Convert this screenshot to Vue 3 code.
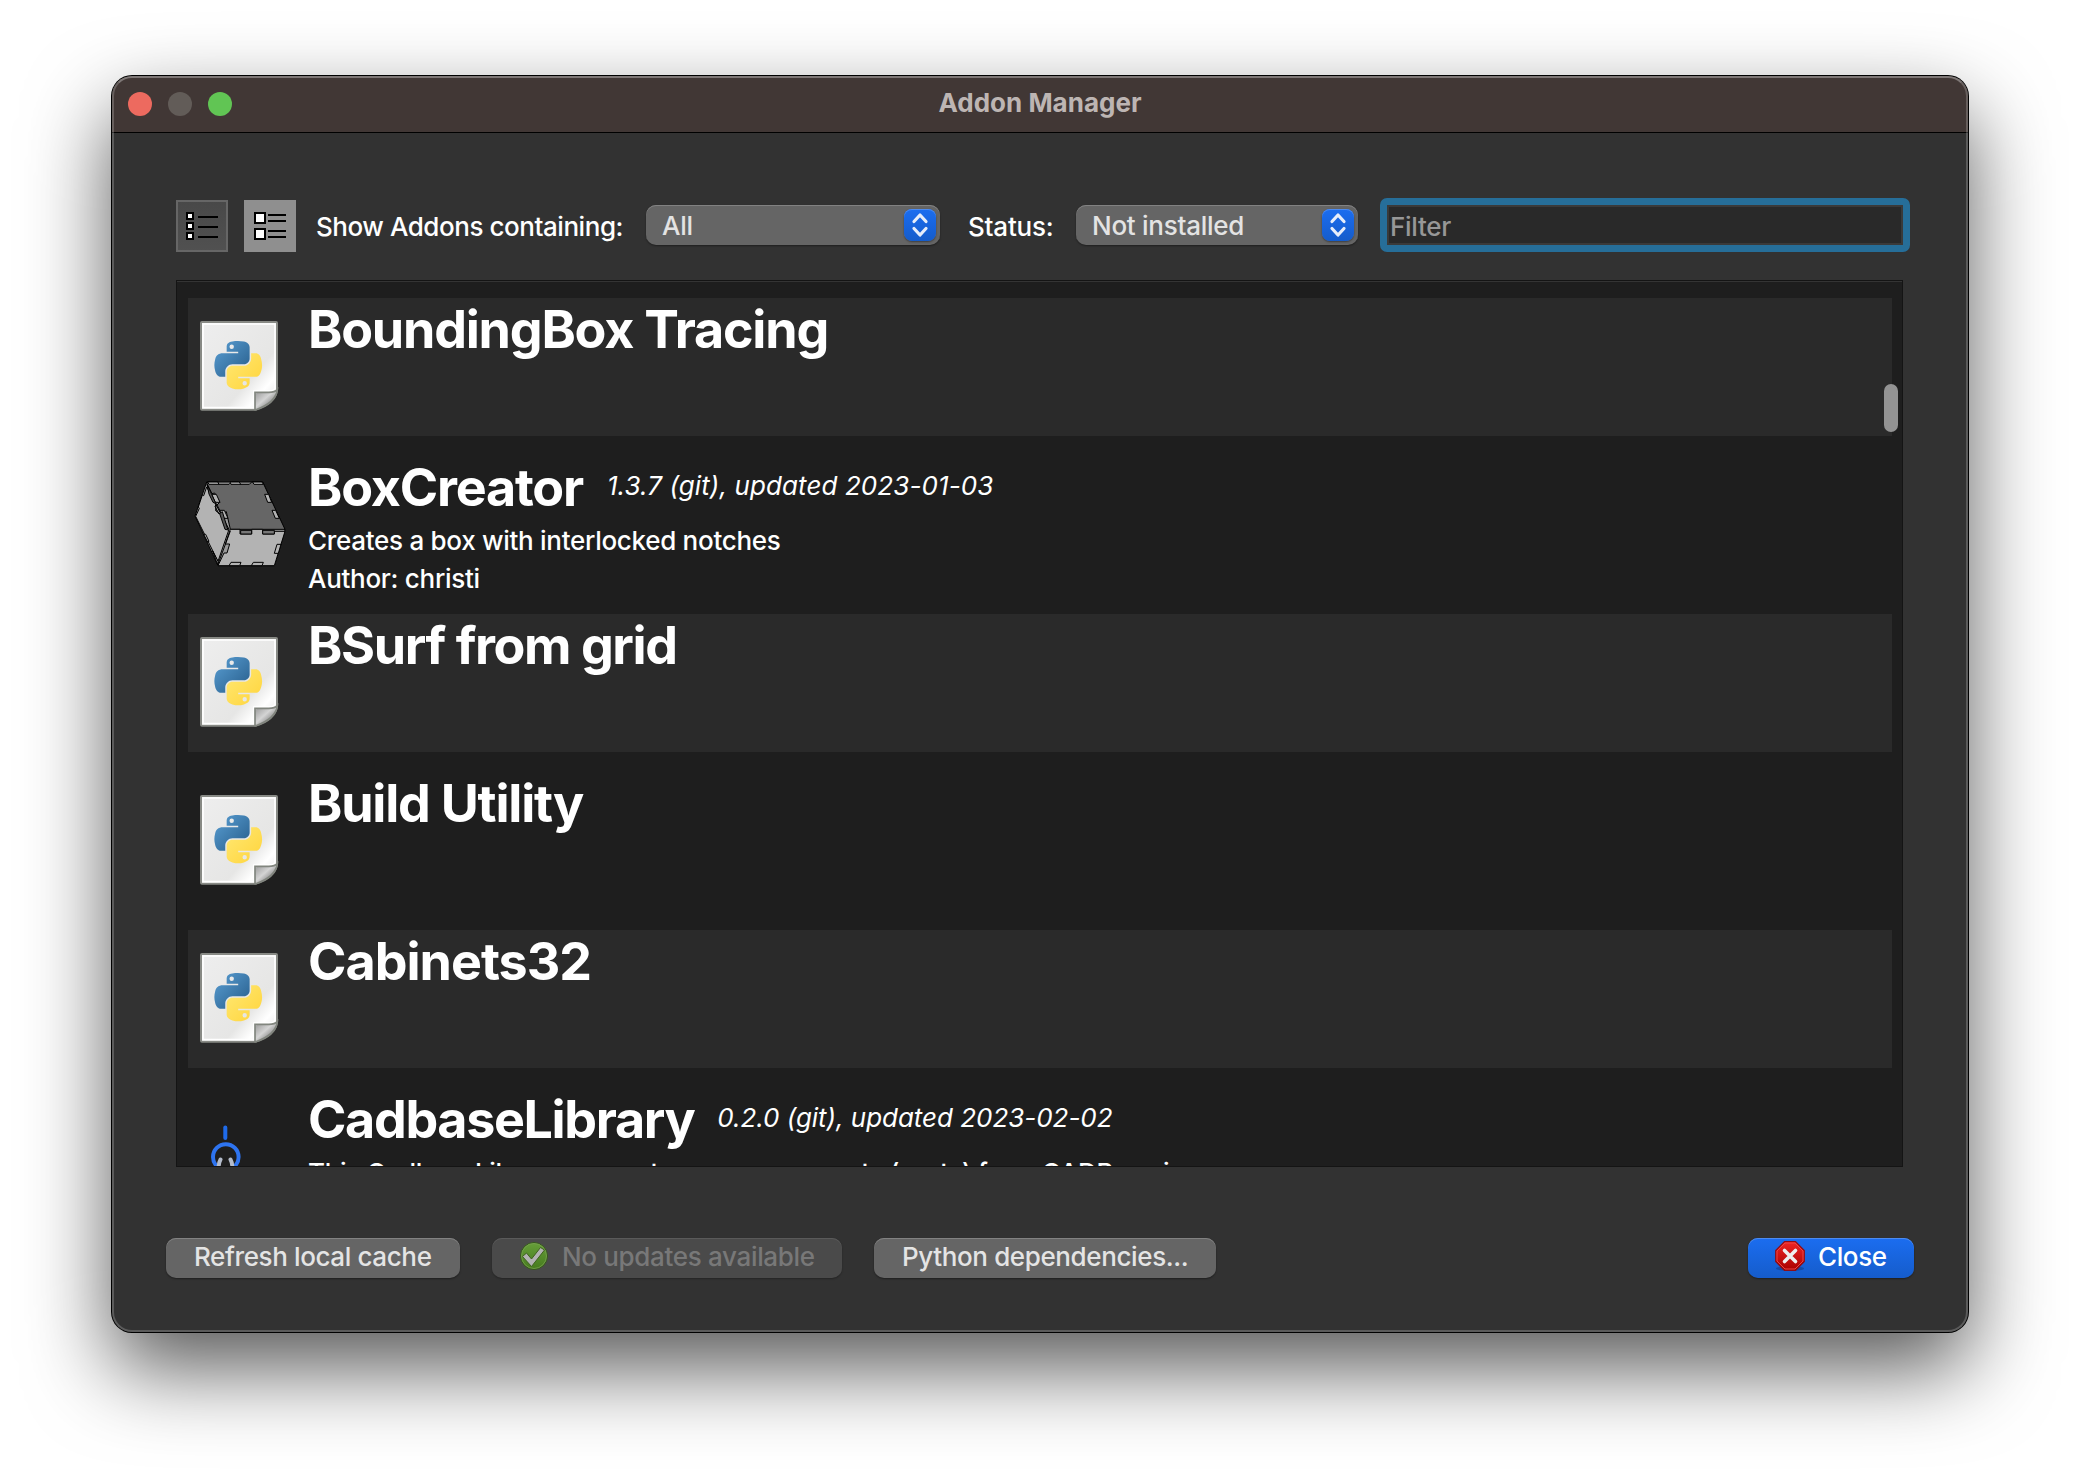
<script setup>
const addons = [
  { name: 'BoundingBox Tracing', icon: 'python' },
  { name: 'BoxCreator', icon: 'box', version: '1.3.7 (git), updated 2023-01-03', description: 'Creates a box with interlocked notches', author: 'Author: christi' },
  { name: 'BSurf from grid', icon: 'python' },
  { name: 'Build Utility', icon: 'python' },
  { name: 'Cabinets32', icon: 'python' },
  { name: 'CadbaseLibrary', icon: 'cadbase', version: '0.2.0 (git), updated 2023-02-02', description: 'This CadbaseLibrary macro to use components (parts) from CADBase in' },
]
</script>

<template>
  <div class="desktop">
    <section class="window">
      <header class="titlebar">
        <div class="lights"><i class="red"></i><i class="gray"></i><i class="green"></i></div>
        <h1>Addon Manager</h1>
      </header>
      <div class="toolbar">
        <button class="view">
          <svg width="52" height="52" viewBox="0 0 52 52">
            <g fill="#fff" stroke="#000" stroke-width="2"><path d="M11 13h6v6h-6zM11 23h6v6h-6zM11 33h6v6h-6z" /></g>
            <path d="M22 17h20M22 27h20M22 37h20" stroke="#000" stroke-width="2" />
          </svg>
        </button>
        <button class="view on">
          <svg width="52" height="52" viewBox="0 0 52 52">
            <path d="M11 13h10v10H11zM11 29h10v10H11z" fill="#fff" stroke="#000" stroke-width="2" />
            <path d="M24 15h18M24 21h18M24 31h18M24 37h18" stroke="#000" stroke-width="2" />
          </svg>
        </button>
        <span class="label show">Show Addons containing:</span>
        <div class="select all"><span>All</span>
          <b><svg width="32" height="32" viewBox="0 0 32 32"><path d="M10 12.500l6-6.500 6 6.500M10 19.500l6 6.500 6-6.500" /></svg></b>
        </div>
        <span class="label status">Status:</span>
        <div class="select state"><span>Not installed</span>
          <b><svg width="32" height="32" viewBox="0 0 32 32"><path d="M10 12.500l6-6.500 6 6.500M10 19.500l6 6.500 6-6.500" /></svg></b>
        </div>
        <div class="filter">Filter</div>
      </div>
      <main class="list">
        <article v-for="a in addons" :key="a.name" class="row" :class="a.icon">
          <div class="icon">
            <svg v-if="a.icon === 'python'" width="110" height="110" viewBox="0 0 330 330">
              <defs>
                <linearGradient id="paper" x1="0" y1="0" x2="1" y2="1"><stop offset="0" stop-color="#eee" /><stop offset=".65" stop-color="#e6e6e5" /><stop offset=".8" stop-color="#fff" /><stop offset="1" stop-color="#ddd" /></linearGradient>
                <linearGradient id="curl" x1="0" y1="0" x2="1" y2="1"><stop offset="0" stop-color="#eee" /><stop offset=".15" stop-color="#a8a8a8" /><stop offset=".45" stop-color="#d4d4d4" /><stop offset=".8" stop-color="#777" /></linearGradient>
                <linearGradient id="pyblue" x1="0" y1="0" x2="1" y2="1"><stop offset="0" stop-color="#5a9fd4" /><stop offset=".8" stop-color="#306998" /></linearGradient>
                <linearGradient id="pyyellow" x1="0" y1="0" x2="1" y2="1"><stop offset="0" stop-color="#ffe873" /><stop offset="1" stop-color="#ffd43b" /></linearGradient>
              </defs>
              <path d="M51 36H273Q276 36 276 39V243Q268 282 213 299H51Q48 299 48 296V39Q48 36 51 36Z" fill="url(#paper)" stroke="#888a85" stroke-width="6" />
              <path d="M54 42H270V236Q266 243 252 243H207V293H54Z" fill="none" stroke="#fff" stroke-width="5" />
              <path d="M210 299V247H252Q270 247 277 239Q272 278 213 299Z" fill="url(#curl)" stroke="#81857e" stroke-width="5" />
              <g transform="translate(88 93) scale(1.290)">
                <path fill="url(#pyblue)" d="M54.900 0C50.300 0 46 .4 42.100 1.100 30.800 3.100 28.700 7.300 28.700 15V25.200H55.500V28.600H18.700C10.900 28.600 4.100 33.300 2 42.200-.5 52.500-.6 58.900 2 69.500 3.900 77.400 8.400 83 16.200 83H25.400V70.800C25.400 61.900 33.100 54.100 42.100 54.100H68.800C76.200 54.100 82.100 48 82.100 40.600V15C82.100 7.800 76 2.400 68.800 1.200 64.200.4 59.500 0 54.900 0ZM40.400 8.200A5.100 5.100 0 1 1 40.400 18.500 5.100 5.100 0 0 1 40.400 8.200Z" />
                <path fill="url(#pyyellow)" d="M85.600 28.700V40.600C85.600 49.800 77.800 57.600 68.800 57.600H42.100C34.800 57.600 28.700 63.900 28.700 71.200V96.700C28.700 104 35 108.300 42.100 110.400 50.600 112.900 58.800 113.300 68.800 110.400 75.500 108.500 82.100 104.600 82.100 96.700V86.500H55.500V83.100H95.600C103.400 83.100 106.300 77.700 109 69.500 111.800 61.100 111.700 53 109 42.200 107.100 34.500 103.400 28.700 95.600 28.700ZM70.600 93.300A5.100 5.100 0 1 1 70.600 103.500 5.100 5.100 0 0 1 70.600 93.300Z" />
              </g>
            </svg>
            <svg v-else-if="a.icon === 'box'" width="110" height="110" viewBox="0 0 330 330" stroke="#000" stroke-width="3" stroke-linejoin="round">
              <path d="M65 51H233L300 195 268 302H99L30 153Z" fill="#999" />
              <path d="M65 66L56 92 52 90 40 126 43 130 32 154 99 289 132 193Z" fill="#b3b3b3" />
              <path d="M66 56L81 86 89 84 104 112 96 120 110 147 124 140 136 193H300L233 51H200L193 58H165L160 51H139L132 58H102L98 51H68Z" fill="#666" />
              <path d="M68 51H98L102 58H72ZM135 51H163L167 58H138ZM203 51H231L235 58H207ZM239 88H251L260 112H248ZM261 136H272L283 160H271ZM80 88H94L105 112H91ZM104 136H118L129 160H116Z" fill="#b3b3b3" />
              <path d="M66 58L80 88 91 112 94 118 90 124 102 147 112 140 128 192 130 195 120 193 104 146 92 137 93 116 84 112 72 87Z" fill="#555" />
              <path d="M136 193H165V207H200V193H233V207H268V199H300L268 302H99L117 264H126L134 237H121Z" fill="#b3b3b3" />
              <path d="M167 196H200V207H167ZM233 196H268V207H233Z" fill="#777" />
              <path d="M132 302L138 292H168L164 302ZM199 302L205 292H235L231 302ZM276 238H288L280 265H268ZM56 208H62L72 229 68 231ZM83 258L99 289 98 300Z" fill="#b3b3b3" />
              <path d="M136 198L98 300" fill="none" />
            </svg>
            <svg v-else width="110" height="110" viewBox="0 0 110 110" fill="none" stroke-linecap="round">
              <path d="M40.300 27.500V38" stroke="#1f6bea" stroke-width="4" />
              <circle cx="40.800" cy="57" r="12.800" stroke="#2e74f0" stroke-width="4" />
              <path d="M35.500 59.500Q33.500 63 33.500 70M45.500 59.500Q47.500 63 47.500 70" stroke="#b4bccb" stroke-width="4" />
            </svg>
          </div>
          <div class="info">
            <div class="head"><h2>{{ a.name }}</h2><em v-if="a.version">{{ a.version }}</em></div>
            <p v-if="a.description">{{ a.description }}</p>
            <p v-if="a.author">{{ a.author }}</p>
          </div>
        </article>
        <div class="thumb"></div>
      </main>
      <footer class="actions">
        <button class="btn refresh">Refresh local cache</button>
        <button class="btn updates">
          <svg width="30" height="30" viewBox="0 0 30 30"><defs><linearGradient id="ok" x1="0" y1="0" x2="0" y2="1"><stop offset="0" stop-color="#669f39" /><stop offset="1" stop-color="#467a1d" /></linearGradient></defs><circle cx="15" cy="15" r="13.500" fill="url(#ok)" stroke="#35551d" /><circle cx="15" cy="15" r="12.500" fill="none" stroke="#77a14f" stroke-width=".8" /><path d="M3.500 15.500L7.500 12 12.500 18 21.500 6.500 25.500 9 12.500 25.500Z" fill="#b3b3b3" stroke="#3f6120" stroke-width="1" /></svg>
          <span>No updates available</span>
        </button>
        <button class="btn deps">Python dependencies...</button>
        <button class="btn close">
          <svg width="30" height="30" viewBox="0 0 30 30"><defs><linearGradient id="stop" x1="0" y1="0" x2="0" y2="1"><stop offset="0" stop-color="#ee2525" /><stop offset="1" stop-color="#a90000" /></linearGradient></defs><ellipse cx="15" cy="27.500" rx="14" ry="2.500" fill="#123e8c" opacity=".6" /><path d="M9.500.7h11l8.800 8.800v11l-8.800 8.800h-11L.7 20.500v-11Z" fill="url(#stop)" stroke="#8c0d18" stroke-width="1.200" /><path d="M10 2h10l8 8v10l-8 8H10l-8-8V10Z" fill="none" stroke="#f04a4a" stroke-width=".9" /><path d="M9.500 9.500l11 11M20.500 9.500l-11 11" stroke="#eee" stroke-width="3.600" stroke-linecap="round" /></svg>
          <span>Close</span>
        </button>
      </footer>
    </section>
  </div>
</template>

<style>
body { background: #fff; }
</style>
<style scoped>
* { box-sizing: border-box; }
.desktop { width: 2080px; height: 1480px; padding: 76px 112px 148px; overflow: hidden; background: #fff; font-family: Inter, "Liberation Sans", sans-serif; font-size: 26px; font-weight: 450; color: #fff; }
.window { width: 1856px; height: 1256px; border-radius: 20px; background: #323232; box-shadow: 0 0 0 1px #000, 0 36px 84px rgba(0, 0, 0, .66); position: relative; display: flex; flex-direction: column; }
.window::after { content: ""; position: absolute; inset: 0; border: 2px solid rgba(255, 255, 255, .2); border-top-color: rgba(255, 255, 255, .32); border-radius: 20px; pointer-events: none; }
.titlebar { flex: none; height: 57px; display: grid; grid-template-columns: 200px 1fr 200px; background: #413735; border-bottom: 1px solid #000; border-radius: 20px 20px 0 0; }
.lights { display: flex; gap: 16px; padding: 16px; }
.lights i { width: 24px; height: 24px; border-radius: 50%; }
.red { background: #ed6a5f; }
.gray { background: #625c58; }
.green { background: #61c554; }
h1 { margin: 0; text-align: center; font-size: 26px; line-height: 54px; font-weight: 700; letter-spacing: 0; color: #bdb5b3; }
button { border: 0; padding: 0; margin: 0; font: inherit; color: inherit; display: flex; }
.toolbar { flex: none; display: flex; align-items: center; height: 54px; margin: 65px 58px 0 64px; white-space: nowrap; }
.view { width: 52px; height: 52px; background: linear-gradient(#484848, #515151); box-shadow: inset 0 0 0 2px #666; margin: 2px 16px 0 0; }
.view.on { background: #8f8f8f; box-shadow: none; margin-right: 20px; }
.label { line-height: 40px; padding-top: 3px; }
.show { width: 330px; letter-spacing: -.45px; }
.status { width: 108px; margin-left: 28px; letter-spacing: -.2px; }
.select { height: 40px; display: flex; justify-content: space-between; align-items: center; padding: 0 4px 0 16px; border-radius: 10px; background: #656565; box-shadow: inset 0 1px #828282, 0 1px 2px rgba(0, 0, 0, .4); color: #e3e3e3; line-height: 38px; letter-spacing: -.27px; }
.select span { padding-top: 2px; }
.all { width: 294px; }
.state { width: 282px; }
.select b { width: 32px; height: 32px; border-radius: 8px; background: linear-gradient(#1b6df0, #155ccb); box-shadow: inset 0 1px #4d8bf1, 0 1px 2px rgba(0, 0, 0, .4); }
.select svg { display: block; }
.select path { fill: none; stroke: #e6edfa; stroke-width: 3.200; stroke-linecap: round; stroke-linejoin: round; }
.filter { width: 530px; height: 54px; margin-left: 22px; border: 7px solid #266e99; border-radius: 7px; background: #292929; box-shadow: inset 0 0 0 2px #3a3a3a, inset 0 -2px #555; color: #979797; padding-left: 3px; line-height: 43px; letter-spacing: -.3px; }
.list { flex: none; position: relative; width: 1727px; height: 887px; margin: 28px 0 0 64px; padding: 17px 10px 0 11px; border: 1px solid #141414; background: #1e1e1e; box-shadow: inset 0 1px #343434; overflow: hidden; }
.row { height: 138px; margin-bottom: 20px; display: flex; }
.row:nth-child(odd) { background: #2a2a2a; }
.icon { width: 120px; height: 138px; padding: 12px 0 0; margin-left: -3px; flex: none; overflow: hidden; }
.box .icon { padding-top: 9px; }
.icon svg { display: block; }
.info { margin-left: 3px; white-space: nowrap; letter-spacing: -.29px; }
.head { display: flex; height: 66px; }
h2 { margin: 0; font-size: 52px; line-height: 63px; font-weight: 700; letter-spacing: -1.220px; }
.row:nth-child(3) h2 { letter-spacing: -1.400px; }
.row:nth-child(5) h2 { letter-spacing: -1px; }
.cadbase h2 { letter-spacing: -1.350px; }
em { margin-left: 24px; line-height: 60px; letter-spacing: .1px; }
.cadbase em { margin-left: 23px; letter-spacing: -.03px; }
p { margin: 0; line-height: 38px; }
.thumb { position: absolute; left: 1707px; top: 103px; width: 14px; height: 48px; border-radius: 7px; background: #939393; }
.actions { display: flex; margin: 71px 54px 0; white-space: nowrap; }
.btn { height: 40px; border-radius: 10px; background: #656565; box-shadow: inset 0 1px #828282, 0 1px 2px rgba(0, 0, 0, .4); color: #e4e4e4; line-height: 37px; padding-left: 28px; letter-spacing: -.38px; }
.refresh { width: 294px; margin-right: 32px; }
.updates { width: 350px; margin-right: 32px; background: #4a4a4a; box-shadow: inset 0 1px #5a5a5a, 0 1px 2px rgba(0, 0, 0, .3); color: #787878; padding-left: 27px; letter-spacing: -.33px; }
.updates svg, .close svg { margin: 3px 13px 0 0; }
.deps { width: 342px; }
.close { width: 166px; margin-left: auto; background: linear-gradient(#1b6df0, #155ccb); box-shadow: inset 0 1px #4d8bf1, 0 1px 2px rgba(0, 0, 0, .4); color: #fff; padding-left: 27px; }
</style>
